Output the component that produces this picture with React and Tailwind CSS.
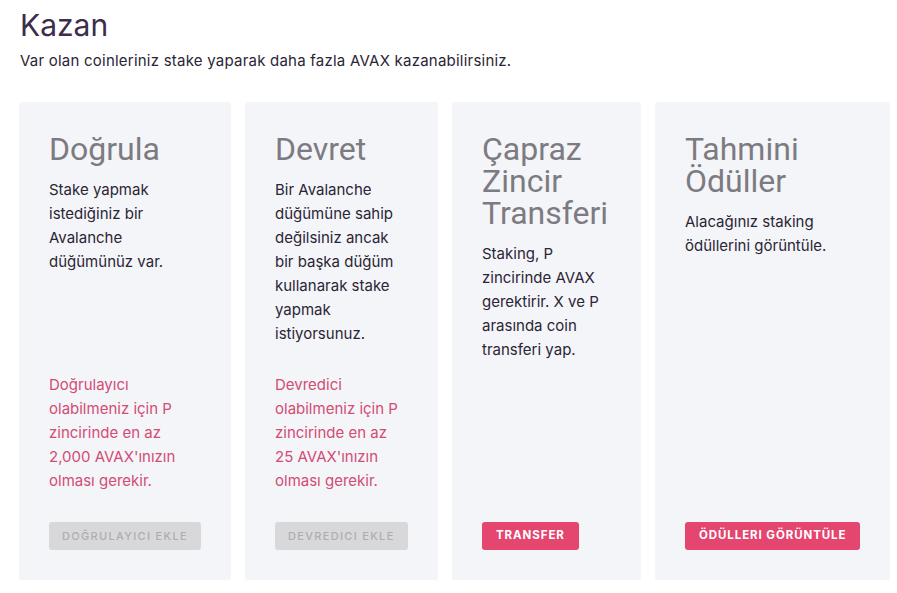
const cards = [
  {
    title: ['Doğrula'],
    desc: 'Stake yapmak istediğiniz bir Avalanche düğümünüz var.',
    warn: "Doğrulayıcı olabilmeniz için P zincirinde en az 2,000 AVAX'ınızın olması gerekir.",
    button: 'DOĞRULAYICI EKLE',
    disabled: true,
  },
  {
    title: ['Devret'],
    desc: 'Bir Avalanche düğümüne sahip değilsiniz ancak bir başka düğüm kullanarak stake yapmak istiyorsunuz.',
    warn: "Devredici olabilmeniz için P zincirinde en az 25 AVAX'ınızın olması gerekir.",
    button: 'DEVREDICI EKLE',
    disabled: true,
  },
  {
    title: ['Çapraz', 'Zincir', 'Transferi'],
    desc: 'Staking, P zincirinde AVAX gerektirir. X ve P arasında coin transferi yap.',
    button: 'TRANSFER',
  },
  {
    title: ['Tahmini', 'Ödüller'],
    desc: 'Alacağınız staking ödüllerini görüntüle.',
    button: 'ÖDÜLLERI GÖRÜNTÜLE',
  },
];

function EarnCard({ card }) {
  return (
    <div className="flex flex-col bg-[#f4f5f9] rounded-[3px] px-[30px] pt-[31px] pb-[30px]">
      <h2 className="font-['Roboto',sans-serif] text-[32px] leading-[32px] text-[#7d7b82] mb-[13px]">
        {card.title.map((t, i) => (
          <div key={i}>{t}</div>
        ))}
      </h2>
      <p className="flex-1 text-[15px] leading-[24px] text-[#2b2535]">{card.desc}</p>
      {card.warn && (
        <p className="text-[15px] leading-[24px] text-[#d34c73] mb-[29px]">{card.warn}</p>
      )}
      <div>
        <button
          className={
            card.disabled
              ? 'h-[28px] px-[13px] whitespace-nowrap rounded-[3px] bg-[#d8d8db] text-[#adadb1] text-[11px] font-medium tracking-[0.12em]'
              : 'h-[28px] px-[14px] whitespace-nowrap rounded-[3px] bg-[#e4466f] text-white text-[11.5px] font-bold tracking-[0.08em]'
          }
        >
          {card.button}
        </button>
      </div>
    </div>
  );
}

export default function App() {
  return (
    <div className="min-h-[593px] bg-white font-['Inter',sans-serif] pl-[19px] pt-[6px]">
      <h1 className="text-[30px] leading-[38px] text-[#3b2d4b] pl-[1px]">Kazan</h1>
      <p className="text-[15px] leading-[20px] tracking-[0.015em] text-[#2b2535] mt-[7px] pl-[1px]">
        Var olan coinleriniz stake yaparak daha fazla AVAX kazanabilirsiniz.
      </p>
      <div className="grid grid-cols-[212px_193px_189px_235px] gap-[14px] mt-[31px] h-[478px]">
        {cards.map((c, i) => (
          <EarnCard key={i} card={c} />
        ))}
      </div>
    </div>
  );
}
